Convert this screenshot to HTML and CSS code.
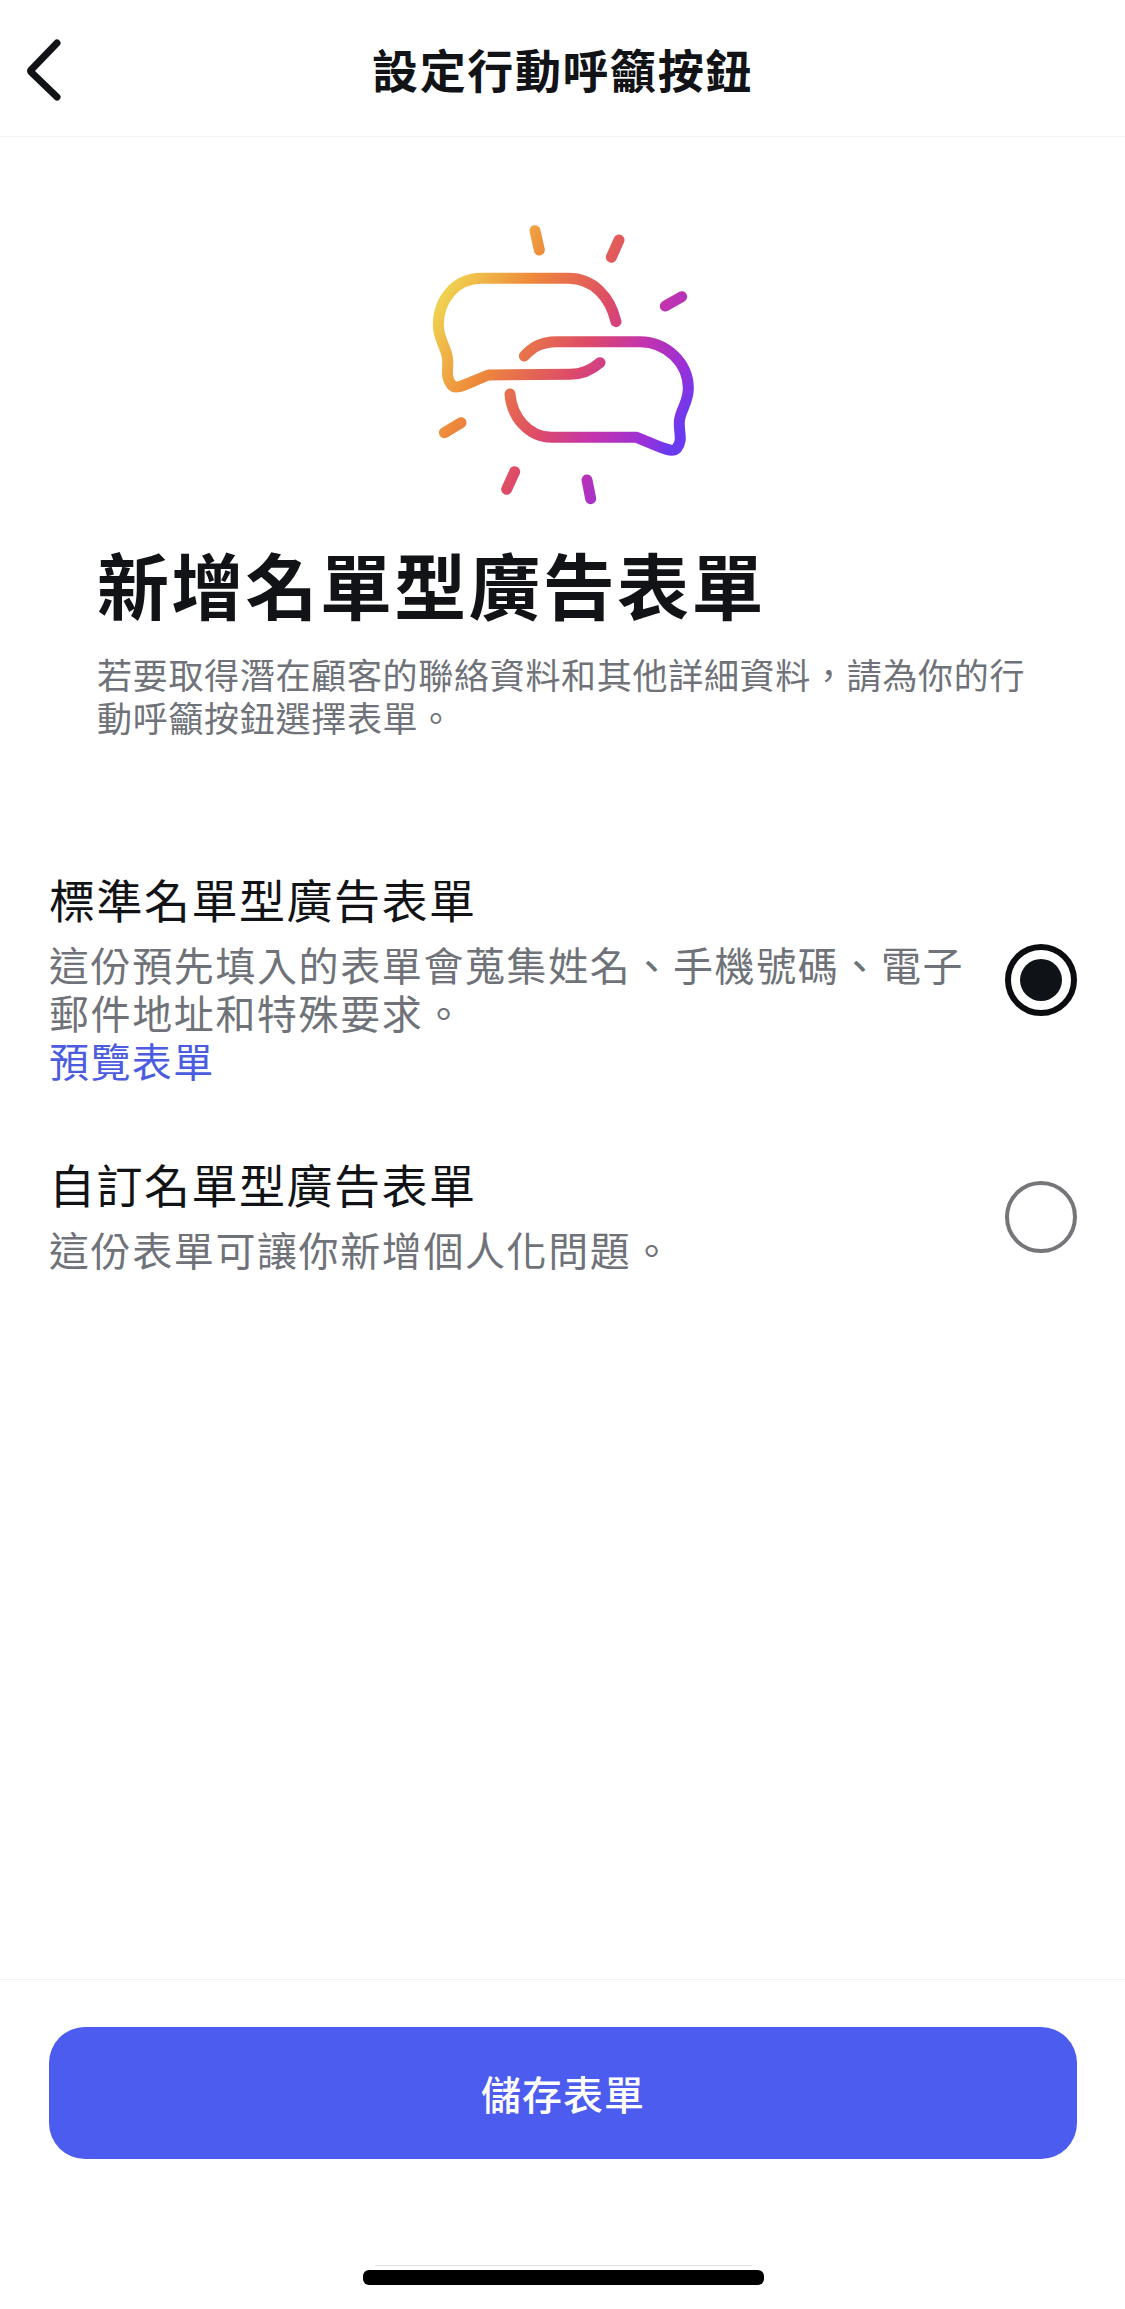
FILE: index.html
```html
<!DOCTYPE html>
<html lang="zh-TW">
<head>
    <meta charset="UTF-8">
    <meta name="viewport" content="width=device-width, initial-scale=1.0">
    <title>設定行動呼籲按鈕</title>
    <link rel="stylesheet" href="styles.css">
</head>
<body>
    <div class="page">
        <header class="top-bar">
            <svg class="back-icon" width="36" height="62" viewBox="0 0 36 62">
                <path d="M31 4 L5 31 Q4 32 5 33 L31 58"/>
            </svg>
            <h2 class="top-title">設定行動呼籲按鈕</h2>
        </header>

        <section class="hero">
            <svg class="hero-logo" width="330" height="320" viewBox="0 0 990 960">
                <defs>
                    <linearGradient id="logoGrad" gradientUnits="userSpaceOnUse" x1="115" y1="320" x2="832" y2="707">
                        <stop offset="0" stop-color="#f0d050"/>
                        <stop offset="0.25" stop-color="#ee8a3a"/>
                        <stop offset="0.55" stop-color="#dd4a68"/>
                        <stop offset="0.72" stop-color="#c434aa"/>
                        <stop offset="0.9" stop-color="#9a30d8"/>
                        <stop offset="1" stop-color="#6a3af0"/>
                    </linearGradient>
                </defs>
                <g class="logo-lines">
                    <path d="M648 365 C630 290 580 235 505 235 L245 235 C165 235 115 300 115 375 C115 420 140 440 143 480 C145 510 135 530 155 555 C170 570 190 555 265 525 L510 523 C545 523 575 510 600 488"/>
                    <path d="M373 468 C395 445 420 425 470 425 L720 425 C800 425 865 490 865 565 C865 610 840 630 838 665 C836 700 850 720 830 745 C815 760 790 745 710 712 L455 712 C385 712 335 650 330 582"/>
                    <path d="M405 92 L418 150"/>
                    <path d="M657 120 L634 172"/>
                    <path d="M845 290 L796 318"/>
                    <path d="M183 668 L133 698"/>
                    <path d="M344 815 L320 868"/>
                    <path d="M561 840 L572 896"/>
                </g>
            </svg>
            <h1 class="hero-title">新增名單型廣告表單</h1>
            <p class="hero-text">若要取得潛在顧客的聯絡資料和其他詳細資料，請為你的行動呼籲按鈕選擇表單。</p>
        </section>

        <section class="options">
            <div class="option">
                <div class="option-body">
                    <div class="option-title">標準名單型廣告表單</div>
                    <div class="option-text">這份預先填入的表單會蒐集姓名、手機號碼、電子郵件地址和特殊要求。</div>
                    <a class="option-link">預覽表單</a>
                </div>
                <span class="radio radio-on"></span>
            </div>
            <div class="option">
                <div class="option-body">
                    <div class="option-title">自訂名單型廣告表單</div>
                    <div class="option-text">這份表單可讓你新增個人化問題。</div>
                </div>
                <span class="radio"></span>
            </div>
        </section>

        <footer class="bottom">
            <button class="save-btn">儲存表單</button>
            <div class="home-line"></div>
            <div class="home-bar"></div>
        </footer>
    </div>
</body>
</html>
```

FILE: styles.css
```css
* {
    box-sizing: border-box;
}

body {
    margin: 0;
    background: #fff;
    color: #111317;
    font-family: "Noto Sans CJK TC", "Noto Sans", sans-serif;
}

.page {
    height: 2309px;
    display: flex;
    flex-direction: column;
    overflow: hidden;
}

.top-bar {
    height: 137px;
    flex: none;
    display: grid;
    grid-template-columns: 1fr auto 1fr;
    align-items: center;
    border-bottom: 1px solid #f4f4f5;
}

.back-icon {
    margin-left: 26px;
    margin-top: 3px;
}

.back-icon path {
    fill: none;
    stroke: #111317;
    stroke-width: 7;
    stroke-linecap: round;
    stroke-linejoin: round;
}

.top-title {
    margin: 0;
    font-size: 46px;
    line-height: 60px;
    font-weight: 700;
    letter-spacing: 1.6px;
}

.hero {
    padding: 63px 49px 0 97px;
}

.hero-logo {
    display: block;
    margin-left: 303px;
}

.logo-lines path {
    fill: none;
    stroke: url(#logoGrad);
    stroke-width: 33;
    stroke-linecap: round;
    stroke-linejoin: round;
}

.hero-title {
    margin: 18px 0 0;
    font-size: 72px;
    line-height: 90px;
    font-weight: 700;
    letter-spacing: 2.3px;
}

.hero-text {
    margin: 24px 0 0;
    width: 940px;
    color: #6f7379;
    font-size: 35px;
    line-height: 43px;
    letter-spacing: 0.7px;
}

.options {
    padding: 0 48px 0 49px;
    margin-top: 130px;
    display: flex;
    flex-direction: column;
    gap: 61px;
}

.option {
    display: flex;
    align-items: center;
    justify-content: space-between;
}

.option-body {
    width: 930px;
    margin-bottom: 8px;
}

.option-title {
    font-size: 46px;
    line-height: 60px;
    letter-spacing: 1.5px;
    margin-bottom: 12px;
}

.option-text {
    color: #6f7379;
    font-size: 40px;
    line-height: 48px;
    letter-spacing: 1.6px;
}

.option-link {
    display: block;
    color: #4c5ce0;
    font-size: 40px;
    line-height: 48px;
    letter-spacing: 1.4px;
}

.radio {
    width: 72px;
    height: 72px;
    flex: none;
    border: 4px solid #76767a;
    border-radius: 50%;
}

.radio-on {
    border: 6px solid #0b0d10;
    display: flex;
    align-items: center;
    justify-content: center;
}

.radio-on::after {
    content: "";
    width: 42px;
    height: 42px;
    border-radius: 50%;
    background: #0f1217;
}

.bottom {
    margin-top: auto;
    height: 330px;
    flex: none;
    border-top: 1px solid #f2f2f3;
    padding: 47px 48px 0 49px;
    display: flex;
    flex-direction: column;
    align-items: center;
}

.save-btn {
    width: 100%;
    height: 132px;
    flex: none;
    border: none;
    border-radius: 36px;
    background: #4c5cee;
    color: #fff;
    font-family: inherit;
    font-size: 40px;
    font-weight: 500;
    letter-spacing: 1px;
}

.home-line {
    width: 377px;
    height: 1px;
    margin-top: 106px;
    background: #e2e2e2;
}

.home-bar {
    width: 401px;
    height: 15px;
    margin-top: 4px;
    border-radius: 6px;
    background: #000;
}
```
